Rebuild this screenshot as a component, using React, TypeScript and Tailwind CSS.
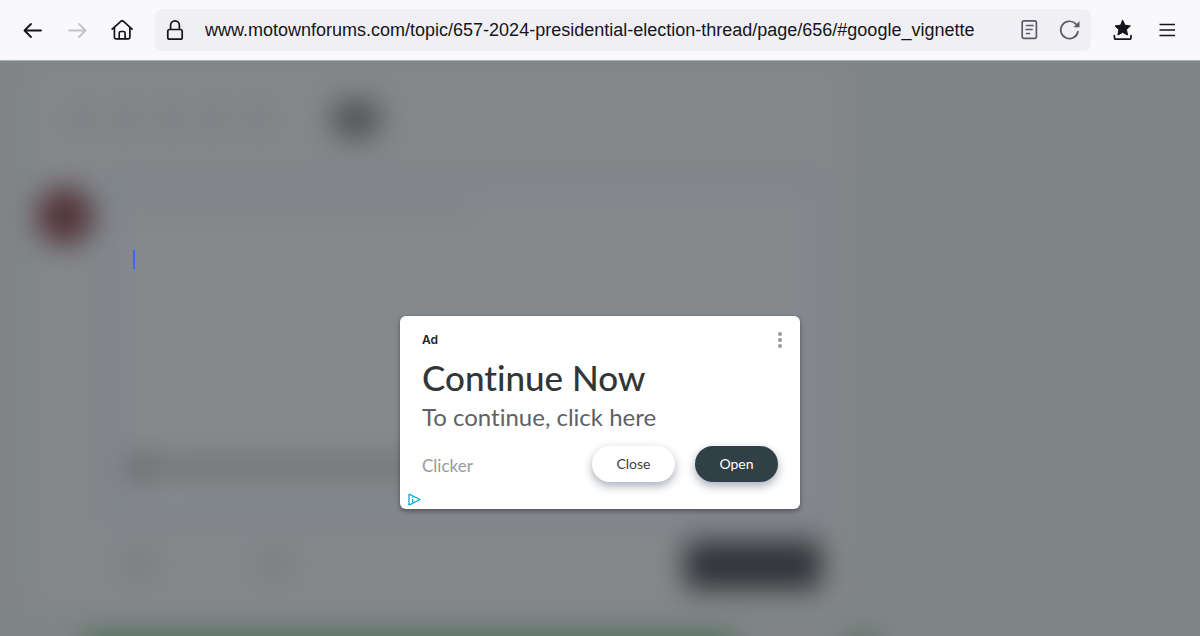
import type { ReactNode } from "react";

const PAGES = [1, 2, 3, 4, 5];

function IconButton({ label, disabled, children }: { label: string; disabled?: boolean; children: ReactNode }) {
  return (
    <button
      type="button"
      aria-label={label}
      disabled={disabled}
      className="flex h-11 w-11 shrink-0 items-center justify-center text-[#15141a] disabled:text-[#c3c3c7]"
    >
      {children}
    </button>
  );
}

function ArrowIcon({ flip }: { flip?: boolean }) {
  return (
    <svg
      viewBox="0 0 24 24"
      className={flip ? "h-6 w-6 -scale-x-100" : "h-6 w-6"}
      fill="none"
      stroke="currentColor"
      strokeWidth="1.8"
      strokeLinecap="round"
      strokeLinejoin="round"
    >
      <path d="M20 12.5H3.5M10 6L3.5 12.5l6.500 6.500" />
    </svg>
  );
}

function Toolbar() {
  return (
    <header className="flex h-[61px] shrink-0 items-center border-b border-[#aeb1b4] bg-[#f9f9fb] px-[11px]">
      <IconButton label="Back">
        <ArrowIcon />
      </IconButton>
      <IconButton label="Forward" disabled>
        <ArrowIcon flip />
      </IconButton>
      <IconButton label="Home">
        <svg viewBox="0 0 24 24" className="h-6 w-6" fill="none" stroke="currentColor" strokeWidth="1.7" strokeLinecap="round" strokeLinejoin="round">
          <path d="M3.2 11.2L12.1 3.2a1.6 1.6 0 0 1 2.1 0l8.9 8" />
          <path d="M5.4 9.5v9.6a1.7 1.7 0 0 0 1.7 1.7h12.1a1.7 1.7 0 0 0 1.7-1.7V9.5" />
          <path d="M10.2 20.5v-5.4a1.6 1.6 0 0 1 1.6-1.6h2.7a1.6 1.6 0 0 1 1.6 1.6v5.4" />
        </svg>
      </IconButton>

      <div className="ml-3 flex h-[42px] min-w-0 flex-1 items-center rounded-lg bg-[#f0f0f4] pl-2 pr-px">
        <svg viewBox="0 0 24 24" className="h-6 w-6 shrink-0 text-[#15141a]" fill="none" stroke="currentColor" strokeWidth="1.7" strokeLinejoin="round">
          <rect x="4.8" y="11.5" width="14.4" height="9.7" rx="1.8" />
          <path d="M7.6 11.5V7.2a4.4 4.4 0 0 1 8.8 0v4.3" />
        </svg>
        <input
          type="text"
          aria-label="Address"
          readOnly
          defaultValue="www.motownforums.com/topic/657-2024-presidential-election-thread/page/656/#google_vignette"
          className="ml-[18px] min-w-0 flex-1 bg-transparent font-['Liberation_Sans',sans-serif] text-lg text-[#15141a] outline-none"
        />
        <button type="button" aria-label="Reader view" className="flex h-10 w-10 shrink-0 items-center justify-center text-[#5b5b66]">
          <svg viewBox="0 0 24 24" className="h-6 w-6" fill="none" stroke="currentColor" strokeWidth="1.7" strokeLinecap="round">
            <rect x="4.2" y="2.8" width="14.2" height="17.6" rx="1.8" />
            <path d="M8.5 7.5H15M8 11.5h6M8.500 15.500h3" />
          </svg>
        </button>
        <button type="button" aria-label="Reload" className="flex h-10 w-10 shrink-0 items-center justify-center text-[#5b5b66]">
          <svg viewBox="0 0 24 24" className="h-6 w-6" fill="none" stroke="currentColor" strokeWidth="1.7" strokeLinecap="round" strokeLinejoin="round">
            <path d="M20 13.5a8.7 8.7 0 1 1-2.5-7.8l1.8 1.9" />
            <path d="M21.2 4v5h-5z" fill="currentColor" strokeWidth="0.6" />
          </svg>
        </button>
      </div>

      <div className="ml-2.5 flex">
        <IconButton label="Bookmarks">
          <svg viewBox="0 0 24 24" className="h-6 w-6" fill="none" stroke="currentColor" strokeWidth="1.7" strokeLinecap="round" strokeLinejoin="round">
            <path
              d="M11.7 2.3l2.3 4.9 5.4.7-3.9 3.7 1 5.4-4.800-2.600-4.800 2.600 1-5.400-3.900-3.700 5.400-.7z"
              fill="currentColor"
              strokeWidth="1"
            />
            <path d="M3.4 17.5v2a1.7 1.7 0 0 0 1.7 1.7h13.2a1.7 1.7 0 0 0 1.7-1.7v-2" />
          </svg>
        </IconButton>
        <IconButton label="Menu">
          <svg viewBox="0 0 24 24" className="h-6 w-6" fill="none" stroke="currentColor" strokeWidth="1.7">
            <path d="M4.5 6.500H20M4.500 12H20M4.500 17.500H20" />
          </svg>
        </IconButton>
      </div>
    </header>
  );
}

/* Forum topic page, blurred behind the ad */
function ForumPage() {
  return (
    <div aria-hidden="true" className="flex w-full flex-col blur-[14px]">
      <div className="ml-[30px] flex max-w-[815px] flex-col bg-[#83878a]">
        <div className="flex h-[116px] items-center gap-7 pl-11">
          {PAGES.map((page) => (
            <span key={page} className="h-5 w-4 bg-[#787c80]" />
          ))}
          <span className="ml-10 h-9 w-11 rounded bg-[#4e5255]" />
        </div>

        <div className="flex gap-3 pl-1.5">
          <div className="mt-[10px] h-[58px] w-[58px] shrink-0 rounded-full bg-[#52343a]" />
          <div className="flex min-w-0 flex-1 flex-col pr-5">
            <div className="flex h-[342px] flex-col justify-between border-12 border-[#7e838d] bg-[#85898c] px-3 pb-7 pt-4">
              <div className="h-3 w-[340px] max-w-full bg-[#7d8184]" />
              <div className="flex items-center gap-2">
                <span className="h-6 w-6 bg-[#5f6366]" />
                <span className="h-5 w-[310px] bg-[#6f7376]" />
              </div>
            </div>
            <div className="flex h-[92px] items-center pl-5">
              <span className="h-5 w-6 bg-[#75797c]" />
              <span className="ml-28 h-5 w-6 bg-[#75797c]" />
              <span className="ml-auto mr-1 h-12 w-[136px] rounded bg-[#2f3236]" />
            </div>
          </div>
        </div>
      </div>
      <div className="mt-6 flex gap-28 pl-[84px]">
        <div className="h-10 w-[650px] bg-[#486b50]" />
        <div className="h-10 w-8 bg-[#56705c]" />
      </div>
    </div>
  );
}

function AdCard() {
  return (
    <section className="relative flex w-[400px] flex-col rounded-md bg-white px-[22px] pb-[27px] pt-4 font-['Lato',sans-serif] shadow-[0_2px_5px_rgba(0,0,0,0.4)] [font-variant-ligatures:none]">
      <div className="flex items-center justify-between">
        <span className="font-['Inter',sans-serif] text-xs font-semibold leading-4 text-[#202124]">Ad</span>
        <button type="button" aria-label="More options" className="-mr-1 flex h-4 w-1 items-center justify-center">
          <svg viewBox="0 0 4 16" className="h-4 w-1 shrink-0 fill-[#9a9a9a]">
            <circle cx="2" cy="2" r="2" />
            <circle cx="2" cy="8" r="2" />
            <circle cx="2" cy="14" r="2" />
          </svg>
        </button>
      </div>
      <h1 className="mt-2 text-[35px] font-medium leading-[42px] text-[#333537]">Continue Now</h1>
      <p className="text-2xl leading-[38px] text-[#5f6164]">To continue, click here</p>
      <div className="mt-2.5 flex items-center">
        <a href="#clicker" className="pt-1 text-[17px] text-[#9a9a9a]">Clicker</a>
        <button type="button" className="ml-auto h-9 w-[83px] rounded-full bg-white text-sm text-[#3c4043] shadow-[0_4px_10px_rgba(40,50,80,0.4)]">
          Close
        </button>
        <button type="button" className="ml-5 h-9 w-[83px] rounded-full bg-[#314047] text-sm text-white shadow-[0_4px_10px_rgba(40,50,80,0.4)]">
          Open
        </button>
      </div>
      <a href="#adchoices" aria-label="AdChoices" className="absolute bottom-[3px] left-2">
        <svg viewBox="0 0 13 13" className="h-[13px] w-[13px]" fill="none" stroke="#00aecd" strokeWidth="1.3" strokeLinejoin="round">
          <path d="M1 1L12 6.5 3.5 10.8M1 1v11l2.5-1.2" />
          <path d="M4.7 6v3.6M4.7 3.6v1.2" />
        </svg>
      </a>
    </section>
  );
}

export default function App() {
  return (
    <div className="flex h-screen flex-col overflow-hidden">
      <Toolbar />
      <main className="relative min-h-0 flex-1 overflow-hidden bg-[#808588]">
        <ForumPage />
        <span className="absolute left-[133px] top-[189px] h-[19px] w-0.5 bg-[#3f66f5]" />
        <div className="absolute inset-0 flex items-center justify-center pt-32">
          <AdCard />
        </div>
      </main>
    </div>
  );
}
